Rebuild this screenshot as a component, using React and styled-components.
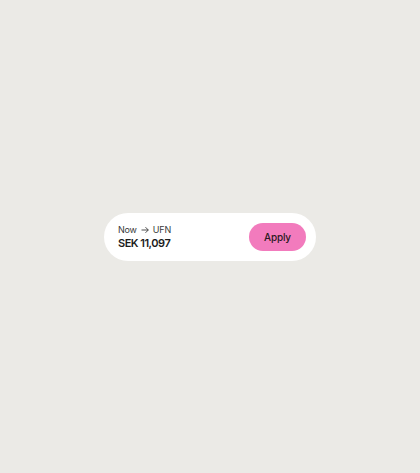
import React from "react";
import styled, { createGlobalStyle } from "styled-components";

const Global = createGlobalStyle`
  html, body { margin: 0; padding: 0; background: #ebeae6; }
  body { font-family: Inter, "Noto Sans", sans-serif; }
`;

const Page = styled.div`
  width: 420px;
  height: 473px;
  display: flex;
  align-items: center;
  justify-content: center;
`;

const Bar = styled.div`
  width: 212px;
  height: 48px;
  box-sizing: border-box;
  background: #ffffff;
  border-radius: 24px;
  display: flex;
  align-items: center;
  justify-content: space-between;
  padding: 0 10px 0 14px;
`;

const Info = styled.div`
  display: flex;
  flex-direction: column;
  gap: 0;
`;

const Route = styled.div`
  display: flex;
  align-items: center;
  gap: 4px;
  font-size: 9px;
  color: #3a3a3a;
  line-height: 12px;
  letter-spacing: -0.2px;
`;

const Price = styled.div`
  font-size: 11px;
  font-weight: 600;
  color: #1c1c1c;
  letter-spacing: -0.5px;
  line-height: 14px;
`;

const Button = styled.button`
  width: 57px;
  height: 28px;
  border: none;
  border-radius: 14px;
  background: #f27bbd;
  color: #2a1a22;
  font-family: Inter, "Noto Sans", sans-serif;
  font-size: 10px;
  font-weight: 500;
  letter-spacing: -0.2px;
  padding: 0;
  cursor: pointer;
`;

const Arrow = () => (
  <svg width="8" height="8" viewBox="0 0 8 8" fill="none" stroke="#3a3a3a" strokeWidth="0.9">
    <path d="M0.5 4H7.3M4.5 1.2L7.3 4L4.5 6.8" />
  </svg>
);

export default function App() {
  return (
    <>
      <Global />
      <Page>
        <Bar>
          <Info>
            <Route>
              <span>Now</span>
              <Arrow />
              <span>UFN</span>
            </Route>
            <Price>SEK 11,097</Price>
          </Info>
          <Button>Apply</Button>
        </Bar>
      </Page>
    </>
  );
}
